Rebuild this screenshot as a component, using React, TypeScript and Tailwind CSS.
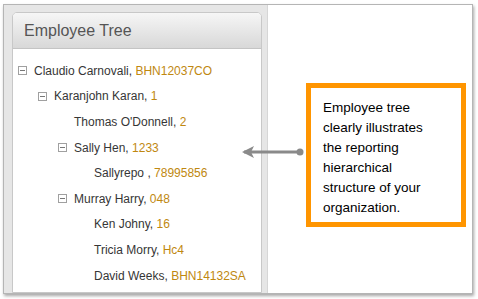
import React from 'react';

type Node = { name: string; id: string; level: number; open?: boolean };

const rows: Node[] = [
  { name: 'Claudio Carnovali', id: 'BHN12037CO', level: 0, open: true },
  { name: 'Karanjohn Karan', id: '1', level: 1, open: true },
  { name: "Thomas O'Donnell", id: '2', level: 2 },
  { name: 'Sally Hen', id: '1233', level: 2, open: true },
  { name: 'Sallyrepo ', id: '78995856', level: 3 },
  { name: 'Murray Harry', id: '048', level: 2, open: true },
  { name: 'Ken Johny', id: '16', level: 3 },
  { name: 'Tricia Morry', id: 'Hc4', level: 3 },
  { name: 'David Weeks', id: 'BHN14132SA', level: 3 },
];

const indent = ['pl-0', 'pl-[20px]', 'pl-[40px]', 'pl-[60px]'];

function Toggle() {
  return (
    <span className="w-[9px] h-[9px] border border-[#a0a0a0] bg-white flex items-center justify-center">
      <span className="w-[5px] h-px bg-[#777]" />
    </span>
  );
}

export default function App() {
  return (
    <div className="w-[478px] h-[299px] bg-white overflow-hidden relative font-['Liberation_Sans',Arial,sans-serif]">
      <div className="ml-[3px] mt-[4px] w-[470px] h-[290px] bg-white border border-[#b5b5b5] shadow-[1px_2px_3px_rgba(0,0,0,0.35)] flex overflow-hidden">
        <div className="w-[264px] bg-[#e6e6e6] pl-[8px] pt-[7px] pr-[5px] border-r border-[#d6d6d6]">
          <div className="h-full bg-white border border-[#c8c8c8] rounded-t-[5px] overflow-hidden">
            <div className="h-[36px] bg-gradient-to-b from-[#f6f6f6] to-[#d8d8d8] border-b border-[#c4c4c4] flex items-center pl-[11px]">
              <span className="text-[16px] text-[#555]">Employee Tree</span>
            </div>
            <div className="pt-[9px] pl-[5px]">
              {rows.map((r, i) => (
                <div key={i} className={`h-[25.6px] flex items-center text-[12px] ${indent[r.level]}`}>
                  <span className="w-[16px] flex">{r.open && <Toggle />}</span>
                  <span className="text-[#363636]">{r.name},&nbsp;</span>
                  <span className="text-[#c08810]">{r.id}</span>
                </div>
              ))}
            </div>
          </div>
        </div>
        <div className="flex-1 pl-[38px] pt-[78px]">
          <div className="w-[160px] h-[144px] border-[5px] border-[#ff9500] pl-[12px] pt-[10px] text-[13.5px] leading-[20px] text-black">
            Employee tree
            <br />
            clearly illustrates
            <br />
            the reporting
            <br />
            hierarchical
            <br />
            structure of your
            <br />
            organization.
          </div>
        </div>
      </div>
      <svg className="absolute left-[240px] top-[144px]" width="66" height="16" viewBox="0 0 66 16">
        <line x1="4" y1="8" x2="60" y2="8" stroke="#8a8a8a" strokeWidth="3" />
        <path d="M2 8 L14 2 L11 8 L14 14 Z" fill="#8a8a8a" />
        <circle cx="60" cy="8" r="3.5" fill="#8a8a8a" />
      </svg>
    </div>
  );
}
